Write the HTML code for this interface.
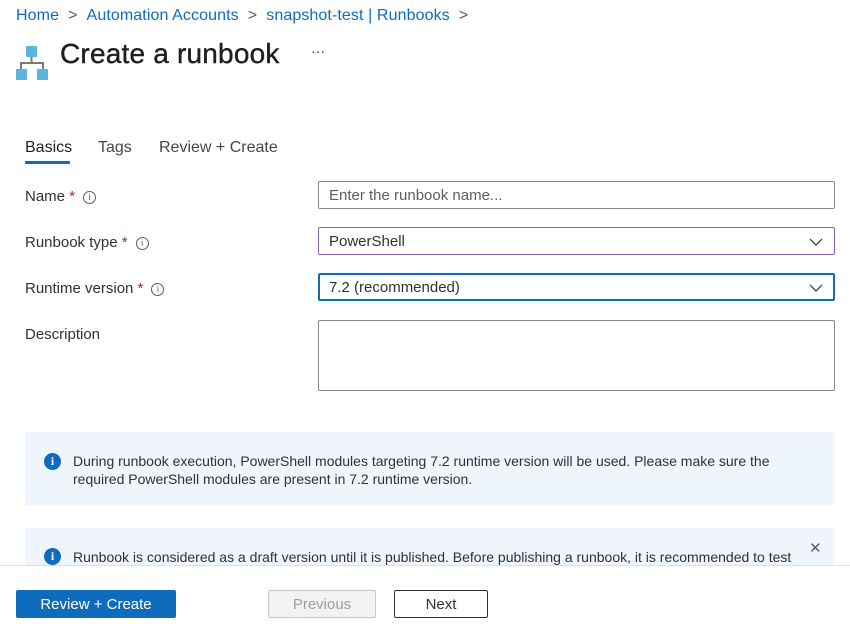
<!DOCTYPE html>
<html><head><meta charset="utf-8"><style>
*{box-sizing:border-box;margin:0;padding:0}
body{width:850px;height:624px;overflow:hidden;background:#fff;font-family:"Liberation Sans",sans-serif;color:#323130;position:relative}
.a{position:absolute;white-space:nowrap}
.bc{top:7px;left:16px;font-size:16px;color:#0f6cbd;letter-spacing:0.1px}
.bc span.s{color:#605e5c;margin:0 9px}
.lbl{left:25px;font-size:15px;color:#323130}
.req{color:#a4262c}
.ii{display:inline-block;width:13px;height:13px;border:1px solid #605e5c;border-radius:50%;font-size:9px;text-align:center;line-height:11px;color:#605e5c;vertical-align:1px;margin-left:8px}
.in{position:absolute;left:318px;width:517px;border:1px solid #8a8886;border-radius:2px;font-size:15px;padding-left:10px;color:#323130}
.chev{position:absolute;right:10px;top:7px}
.info{position:absolute;left:25px;width:809px;background:#eef5fc}
.ic{position:absolute;width:17px;height:17px;border-radius:50%;background:#0f6cbd;color:#fff;font-size:12px;font-weight:bold;text-align:center;line-height:17px;font-family:"Liberation Serif",serif}
.t{position:absolute;left:48px;font-size:14px;line-height:18px;color:#323130}
.btn{position:absolute;top:590px;height:28px;font-size:15px;text-align:center;line-height:27px;border-radius:2px}
</style></head><body>
<div class="a bc">Home<span class="s">&gt;</span>Automation Accounts<span class="s">&gt;</span>snapshot-test | Runbooks<span class="s">&gt;</span></div>
<svg class="a" style="left:16px;top:46px" width="32" height="35" viewBox="0 0 32 35">
<rect x="10" y="0" width="11" height="11" rx="1" fill="#5ab4e0"/>
<path d="M15.5 11V17M5 24V17H27V24" stroke="#7a7a7a" stroke-width="2" fill="none"/>
<rect x="0" y="23" width="11" height="11" rx="1" fill="#5ab4e0"/>
<rect x="21" y="23" width="11" height="11" rx="1" fill="#5ab4e0"/>
</svg>
<div class="a" style="left:60px;top:38px;font-size:28px;color:#201f1e;-webkit-text-stroke:0.4px #201f1e;letter-spacing:0.2px">Create a runbook</div>
<div class="a" style="left:311px;top:43px;font-size:14px;color:#323130">···</div>
<div class="a" style="left:25px;top:139px;font-size:16px;color:#201f1e">Basics</div>
<div class="a" style="left:25px;top:161px;width:45px;height:3px;background:#0f6cbd;border-radius:1px"></div>
<div class="a" style="left:98px;top:139px;font-size:16px;color:#484644">Tags</div>
<div class="a" style="left:159px;top:139px;font-size:16px;color:#484644">Review + Create</div>
<div class="a lbl" style="top:188px">Name <span class="req">*</span><span class="ii">i</span></div>
<div class="a lbl" style="top:234px">Runbook type <span class="req">*</span><span class="ii">i</span></div>
<div class="a lbl" style="top:280px">Runtime version <span class="req">*</span><span class="ii">i</span></div>
<div class="a lbl" style="top:326px">Description</div>
<div class="in" style="top:181px;height:28px;line-height:28px;color:#605e5c">Enter the runbook name...</div>
<div class="in" style="top:227px;height:28px;line-height:28px;border-color:#8764b8">PowerShell<svg class="chev" width="16" height="14"><path d="M2 4L8 10L14 4" stroke="#323130" fill="none" stroke-width="1.2"/></svg></div>
<div class="in" style="top:273px;height:28px;line-height:26px;border:2px solid #0f6cbd;padding-left:9px">7.2 (recommended)<svg class="chev" style="right:9px;top:6px" width="16" height="14"><path d="M2 4L8 10L14 4" stroke="#323130" fill="none" stroke-width="1.2"/></svg></div>
<div class="in" style="top:320px;height:71px"></div>
<div class="info" style="top:432px;height:73px"><div class="ic" style="left:19px;top:21px">i</div><div class="t" style="top:20px">During runbook execution, PowerShell modules targeting 7.2 runtime version will be used. Please make sure the<br>required PowerShell modules are present in 7.2 runtime version.</div></div>
<div class="info" style="top:528px;height:37px;overflow:hidden"><div class="ic" style="left:19px;top:20px">i</div><div class="t" style="top:20px">Runbook is considered as a draft version until it is published. Before publishing a runbook, it is recommended to test</div><div class="a" style="left:784px;top:11px;font-size:15px;color:#605e5c">✕</div></div>
<div class="a" style="left:0;top:565px;width:850px;height:1px;background:#e1dfdd"></div>
<div class="btn" style="left:16px;width:160px;background:#0f6cbd;color:#fff;border:1px solid #0f6cbd">Review + Create</div>
<div class="btn" style="left:268px;width:108px;background:#f3f2f1;color:#a19f9d;border:1px solid #c8c6c4">Previous</div>
<div class="btn" style="left:394px;width:94px;background:#fff;color:#323130;border:1px solid #323130">Next</div>
</body></html>
